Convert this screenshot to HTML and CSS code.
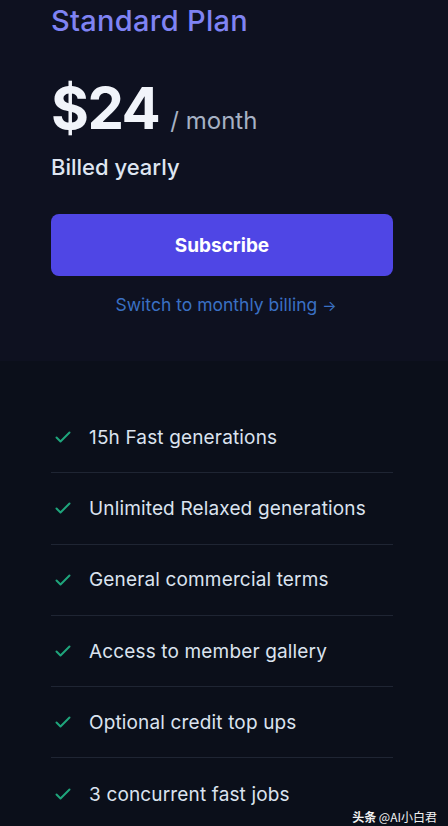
FILE: index.html
```html
<!DOCTYPE html>
<html>
<head>
<meta charset="utf-8">
<link rel="stylesheet" href="styles.css">
</head>
<body>
<div class="page">
  <section class="top">
    <h2 class="plan">Standard Plan</h2>
    <div class="price"><span class="amount">$24</span><span class="per">/ month</span></div>
    <div class="billed">Billed yearly</div>
    <button class="subscribe">Subscribe</button>
    <a class="switch">Switch to monthly billing <span class="arrow">→</span></a>
  </section>
  <section class="features">
    <ul class="list">
      <li class="item"><svg class="check" viewBox="0 0 20 20"><path d="M3.5 10.5l4 4 9-9" fill="none" stroke="currentColor" stroke-width="2" stroke-linecap="round" stroke-linejoin="round"/></svg><span>15h Fast generations</span></li>
      <li class="item"><svg class="check" viewBox="0 0 20 20"><path d="M3.5 10.5l4 4 9-9" fill="none" stroke="currentColor" stroke-width="2" stroke-linecap="round" stroke-linejoin="round"/></svg><span>Unlimited Relaxed generations</span></li>
      <li class="item"><svg class="check" viewBox="0 0 20 20"><path d="M3.5 10.5l4 4 9-9" fill="none" stroke="currentColor" stroke-width="2" stroke-linecap="round" stroke-linejoin="round"/></svg><span>General commercial terms</span></li>
      <li class="item"><svg class="check" viewBox="0 0 20 20"><path d="M3.5 10.5l4 4 9-9" fill="none" stroke="currentColor" stroke-width="2" stroke-linecap="round" stroke-linejoin="round"/></svg><span>Access to member gallery</span></li>
      <li class="item"><svg class="check" viewBox="0 0 20 20"><path d="M3.5 10.5l4 4 9-9" fill="none" stroke="currentColor" stroke-width="2" stroke-linecap="round" stroke-linejoin="round"/></svg><span>Optional credit top ups</span></li>
      <li class="item"><svg class="check" viewBox="0 0 20 20"><path d="M3.5 10.5l4 4 9-9" fill="none" stroke="currentColor" stroke-width="2" stroke-linecap="round" stroke-linejoin="round"/></svg><span>3 concurrent fast jobs</span></li>
    </ul>
    <div class="watermark"><b>头条</b> @AI小白君</div>
  </section>
</div>
</body>
</html>
```
FILE: styles.css
```css
*, *::before, *::after {
  box-sizing: border-box;
}
html, body {
  margin: 0;
  padding: 0;
  background: #0b0f1a;
}
body {
  font-family: Inter, "Noto Sans", sans-serif;
  width: 448px;
  height: 826px;
  overflow: hidden;
}
.page {
  display: flex;
  flex-direction: column;
  height: 826px;
}
.top {
  background: #0e1120;
  padding: 4px 55px 0 51px;
  height: 361px;
  flex: none;
  display: flex;
  flex-direction: column;
}
.plan {
  margin: 0;
  font-size: 29px;
  font-weight: 500;
  line-height: 34px;
  color: #7f83f3;
  letter-spacing: 0.3px;
}
.price {
  display: flex;
  align-items: baseline;
  margin-top: 40px;
}
.amount {
  font-size: 58px;
  font-weight: 700;
  line-height: 60px;
  color: #f1f4fa;
  letter-spacing: -1.5px;
}
.per {
  font-size: 24px;
  color: #a6b1c4;
  margin-left: 11px;
}
.billed {
  margin-top: 14px;
  font-size: 22px;
  font-weight: 500;
  color: #dfe6f1;
  line-height: 30px;
}
.subscribe {
  margin-top: 32px;
  height: 62px;
  width: 342px;
  border: none;
  border-radius: 8px;
  background: #4f46e5;
  color: #fff;
  font-family: Inter, "Noto Sans", sans-serif;
  font-size: 19px;
  font-weight: 700;
  padding: 0;
}
.switch {
  margin-top: 17px;
  padding-left: 8px;
  text-align: center;
  font-size: 17.5px;
  color: #3a70c4;
  line-height: 24px;
  width: 342px;
}
.arrow {
  font-size: 15px;
}
.features {
  position: relative;
  flex: 1;
  padding: 41px 55px 0 51px;
}
.list {
  list-style: none;
  margin: 0;
  padding: 0;
}
.item {
  display: flex;
  align-items: center;
  height: 71.3px;
  border-bottom: 1px solid #1f2533;
  color: #dbe3ef;
  font-size: 19px;
  letter-spacing: 0.15px;
}
.item:last-child {
  border-bottom: none;
}
.check {
  width: 20px;
  height: 20px;
  color: #1fa57c;
  margin-left: 2px;
  margin-right: 16px;
  flex: none;
}
.watermark {
  position: absolute;
  right: 11px;
  bottom: 5px;
  color: #f2f2f2;
  font-family: "Noto Sans CJK SC", sans-serif;
  font-size: 12px;
  line-height: 16px;
}
```
